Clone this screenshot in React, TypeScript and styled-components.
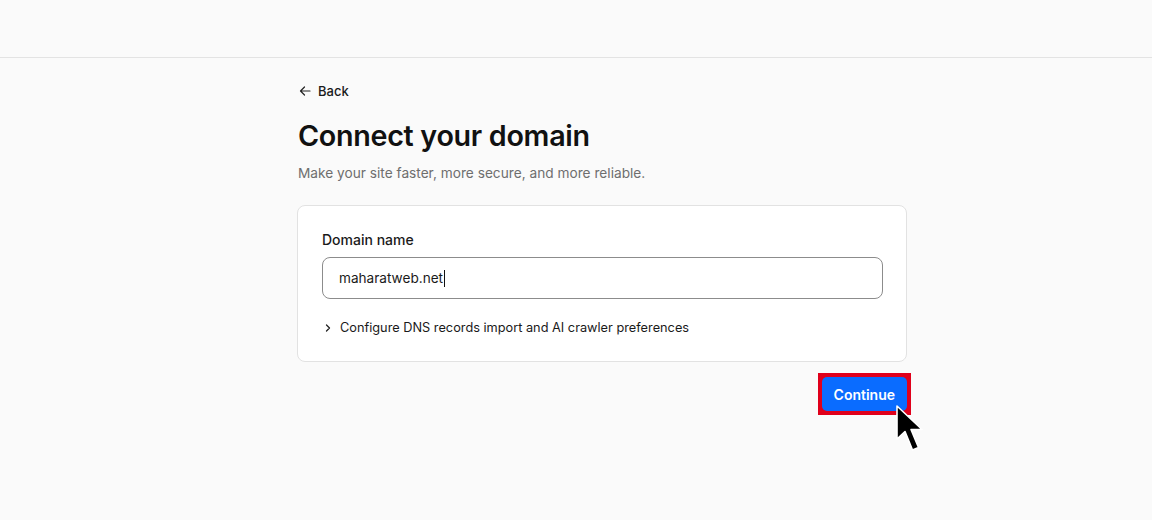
import styled, { createGlobalStyle } from "styled-components";

const GlobalStyle = createGlobalStyle`
  * { box-sizing: border-box; }
  html, body {
    margin: 0;
    padding: 0;
    background: #fafafa;
    font-family: Inter, "Noto Sans", "Liberation Sans", sans-serif;
    color: #1a1a1a;
  }
`;

export default function App() {
  return (
    <>
      <GlobalStyle />
      <Page>
        <TopBar />
        <Main>
          <BackLink href="#">
            <svg width="12" height="12" viewBox="0 0 12 12" fill="none" stroke="#222" strokeWidth="1.2" strokeLinecap="round" strokeLinejoin="round">
              <path d="M11 6H1.5M5.5 2 1.5 6l4 4" />
            </svg>
            Back
          </BackLink>
          <Title>Connect your domain</Title>
          <Subtitle>Make your site faster, more secure, and more reliable.</Subtitle>

          <Card>
            <Label htmlFor="domain">Domain name</Label>
            <InputBox>
              <DomainText id="domain">maharatweb.net</DomainText>
              <Caret />
            </InputBox>
            <Disclosure>
              <svg width="10" height="10" viewBox="0 0 10 10" fill="none" stroke="#222" strokeWidth="1.3" strokeLinecap="round" strokeLinejoin="round">
                <path d="M3.5 2 6.5 5l-3 3" />
              </svg>
              Configure DNS records import and AI crawler preferences
            </Disclosure>
          </Card>

          <Actions>
            <Highlight>
              <ContinueButton>Continue</ContinueButton>
              <Pointer width="32" height="50" viewBox="0 0 32 50">
                <path
                  d="M2 2 L2 35 L10 27.5 L17.5 46 L23.5 43.5 L16 25.5 L27 25.5 Z"
                  fill="#000"
                  stroke="#fff"
                  strokeWidth="1.6"
                  strokeLinejoin="round"
                />
              </Pointer>
            </Highlight>
          </Actions>
        </Main>
      </Page>
    </>
  );
}

const Page = styled.div`
  min-height: 520px;
  background: #fafafa;
`;

const TopBar = styled.header`
  height: 58px;
  border-bottom: 1px solid #e3e3e3;
  background: #fafafa;
`;

const Main = styled.main`
  width: 610px;
  margin-left: 297px;
  padding-top: 24px;
  display: flex;
  flex-direction: column;
`;

const BackLink = styled.a`
  display: inline-flex;
  align-items: center;
  gap: 7px;
  align-self: flex-start;
  padding-left: 2px;
  font-size: 13px;
  font-weight: 500;
  color: #1a1a1a;
  text-decoration: none;
  line-height: 18px;
`;

const Title = styled.h1`
  margin: 19px 0 0;
  font-size: 28.7px;
  font-weight: 600;
  letter-spacing: -0.3px;
  line-height: 34px;
  color: #111;
  padding-left: 1px;
`;

const Subtitle = styled.p`
  margin: 10px 0 0;
  font-size: 13.7px;
  line-height: 20px;
  color: #6e6e6e;
  padding-left: 1px;
`;

const Card = styled.section`
  margin-top: 22px;
  padding: 24px 23px 24px 24px;
  background: #fff;
  border: 1px solid #e2e2e2;
  border-radius: 8px;
  display: flex;
  flex-direction: column;
`;

const Label = styled.label`
  font-size: 14px;
  font-weight: 500;
  line-height: 20px;
  color: #1a1a1a;
`;

const InputBox = styled.div`
  margin-top: 7px;
  height: 42px;
  border: 1.5px solid #8c8c8c;
  border-radius: 8px;
  display: flex;
  align-items: center;
  padding: 0 16px;
  background: #fff;
`;

const DomainText = styled.span`
  font-size: 13.6px;
  color: #1a1a1a;
`;

const Caret = styled.span`
  width: 1px;
  height: 17px;
  background: #111;
  margin-left: 1px;
`;

const Disclosure = styled.div`
  margin-top: 20px;
  display: flex;
  align-items: center;
  gap: 7px;
  padding-left: 1px;
  font-size: 12.75px;
  line-height: 18px;
  color: #1a1a1a;
`;

const Actions = styled.div`
  margin-top: 11px;
  display: flex;
  justify-content: flex-end;
  margin-right: -4px;
`;

const Highlight = styled.div`
  position: relative;
  border: 4px solid #e0001b;
  background: #e0001b;
`;

const ContinueButton = styled.button`
  display: block;
  height: 34px;
  padding: 0 12px;
  border: none;
  border-radius: 5px;
  background: #0a6cff;
  color: #fff;
  font-family: inherit;
  font-size: 14px;
  font-weight: 600;
  cursor: pointer;
`;

const Pointer = styled.svg`
  position: absolute;
  left: 73px;
  top: 27px;
`;
